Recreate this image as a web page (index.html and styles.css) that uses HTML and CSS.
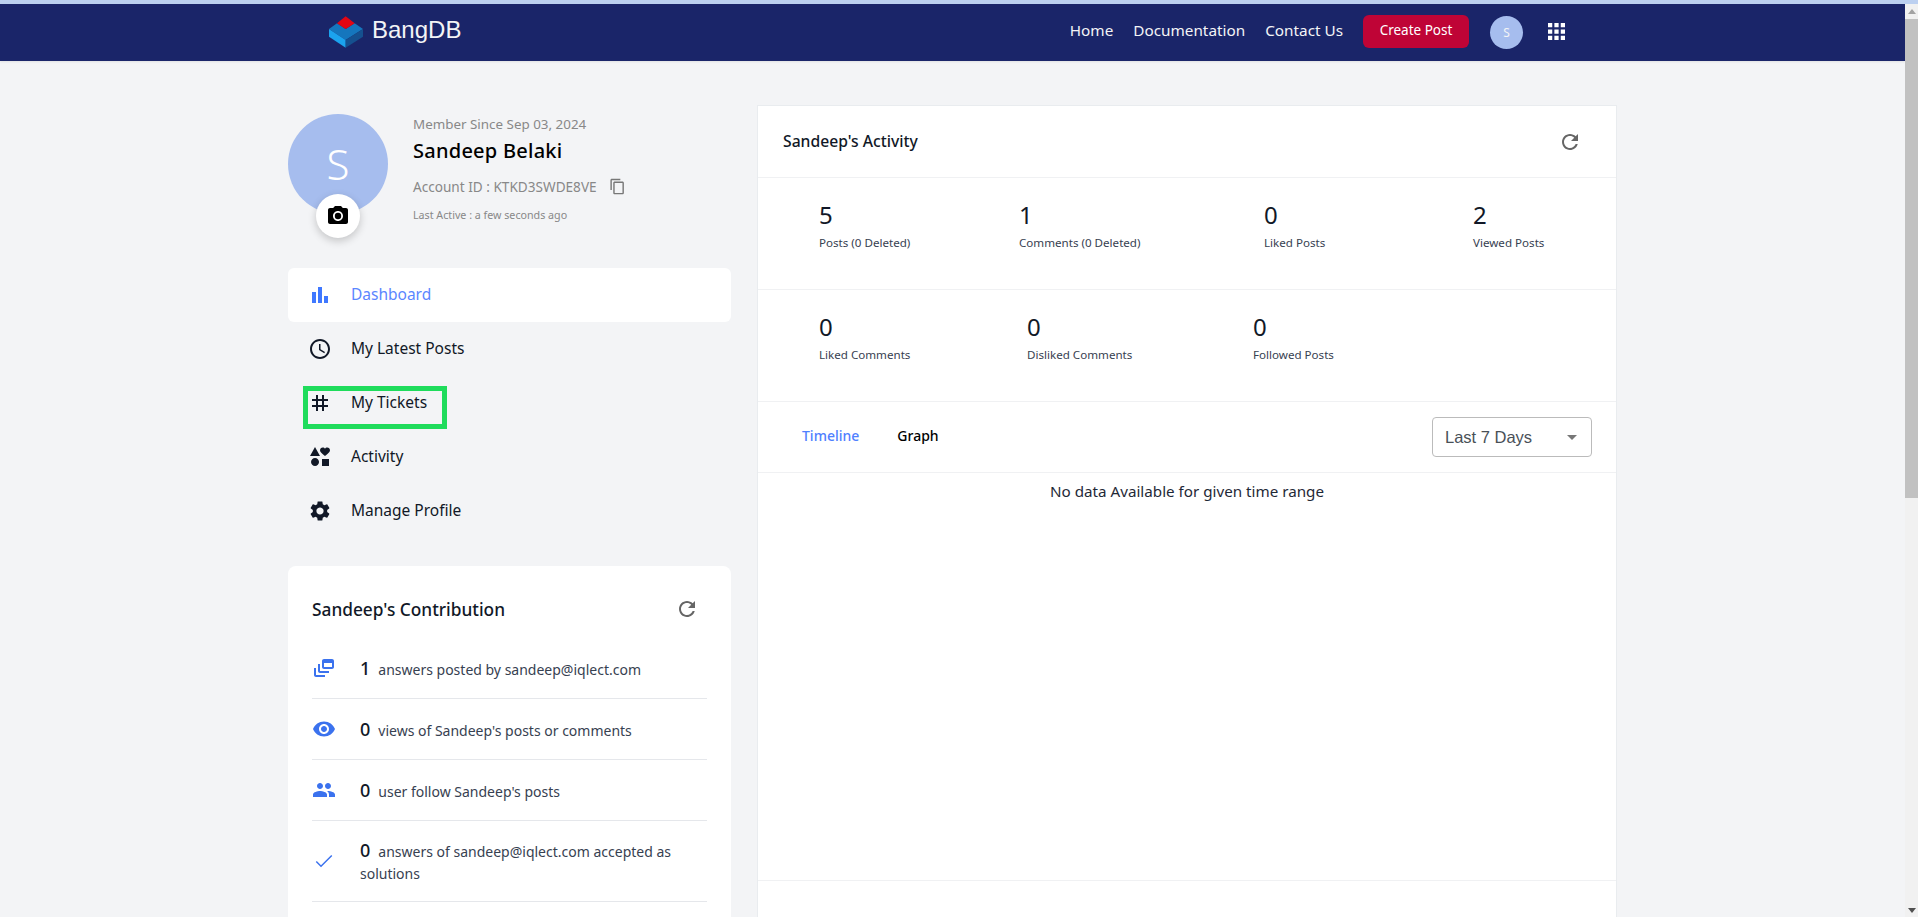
FILE: index.html
```html
<!DOCTYPE html>
<html lang="en">

<head>
    <meta charset="UTF-8">
    <meta name="viewport" content="width=device-width, initial-scale=1.0">
    <title>BangDB Profile</title>

    <link rel="stylesheet" href="styles.css">
</head>

<body>
    <div class="top-strip"></div>
    <div class="page">
        <div class="main">
            <header class="navbar">
                <a class="brand">
                    <svg class="brand-logo" viewBox="28 44 102 94">
                        <polygon fill="#1576bd" points="28,82 52,65 78,82 105,65 130,82 78,115"/>
                        <polygon fill="#1ba3ee" points="28,82 78,115 78,138 28,105"/>
                        <polygon fill="#15508f" points="78,115 130,82 130,105 78,138"/>
                        <polygon fill="#e30613" points="78,44 105,65 78,82 52,65"/>
                    </svg>
                    <span>BangDB</span>
                </a>
                <nav class="nav-links">
                    <a>Home</a>
                    <a>Documentation</a>
                    <a>Contact Us</a>
                </nav>
                <button class="create-btn" type="button">Create Post</button>
                <div class="nav-avatar">S</div>
                <svg class="apps-icon" viewBox="4 4 16 16"><path d="M4 8h4V4H4v4zm6 12h4v-4h-4v4zm-6 0h4v-4H4v4zm0-6h4v-4H4v4zm6 0h4v-4h-4v4zm6-10v4h4V4h-4zm-6 4h4V4h-4v4zm6 6h4v-4h-4v4zm0 6h4v-4h-4v4z"/></svg>
            </header>

            <div class="content">
                <aside class="sidebar">
                    <section class="profile">
                        <div class="avatar">
                            S
                            <div class="camera">
                                <svg class="icon" viewBox="0 0 24 24"><circle cx="12" cy="12" r="3.2"/><path d="M9 2L7.17 4H4c-1.1 0-2 .9-2 2v12c0 1.1.9 2 2 2h16c1.1 0 2-.9 2-2V6c0-1.1-.9-2-2-2h-3.17L15 2H9zm3 15c-2.76 0-5-2.24-5-5s2.24-5 5-5 5 2.24 5 5-2.24 5-5 5z"/></svg>
                            </div>
                        </div>
                        <div class="profile-info">
                            <div class="member">Member Since Sep 03, 2024</div>
                            <div class="name">Sandeep Belaki</div>
                            <div class="account">
                                Account ID : KTKD3SWDE8VE
                                <svg class="copy-icon" viewBox="0 0 24 24"><path d="M16 1H4c-1.1 0-2 .9-2 2v14h2V3h12V1zm3 4H8c-1.1 0-2 .9-2 2v14c0 1.1.9 2 2 2h11c1.1 0 2-.9 2-2V7c0-1.1-.9-2-2-2zm0 16H8V7h11v14z"/></svg>
                            </div>
                            <div class="last-active">Last Active : a few seconds ago</div>
                        </div>
                    </section>

                    <ul class="menu">
                        <li class="menu-item active">
                            <svg class="icon" viewBox="0 0 24 24"><path d="M4 9h4v11H4zm12 4h4v7h-4zm-6-9h4v16h-4z"/></svg>
                            Dashboard
                        </li>
                        <li class="menu-item">
                            <svg class="icon" viewBox="0 0 24 24"><path d="M11.99 2C6.47 2 2 6.48 2 12s4.47 10 9.99 10C17.52 22 22 17.52 22 12S17.52 2 11.99 2zM12 20c-4.42 0-8-3.58-8-8s3.58-8 8-8 8 3.58 8 8-3.58 8-8 8zm.5-13H11v6l5.25 3.15.75-1.23-4.5-2.67z"/></svg>
                            My Latest Posts
                        </li>
                        <li class="menu-item">
                            <svg class="icon" viewBox="0 0 24 24"><path d="M20 10V8h-4V4h-2v4h-4V4H8v4H4v2h4v4H4v2h4v4h2v-4h4v4h2v-4h4v-2h-4v-4h4zm-6 4h-4v-4h4v4z"/></svg>
                            My Tickets
                            <span class="highlight"></span>
                        </li>
                        <li class="menu-item">
                            <svg class="icon" viewBox="0 0 24 24"><path d="M7.02 13c-2.21 0-4 1.79-4 4s1.79 4 4 4 4-1.79 4-4-1.79-4-4-4zm6.98 1v7h7v-7zM7 2l-5 9h10zm12.25.5c-1.06 0-1.81.56-2.25 1.17-.44-.61-1.19-1.17-2.25-1.17C13.19 2.5 12 3.78 12 5.25c0 2 2.42 3.42 5 5.75 2.58-2.33 5-3.75 5-5.75 0-1.47-1.19-2.75-2.75-2.75z"/></svg>
                            Activity
                        </li>
                        <li class="menu-item">
                            <svg class="icon" viewBox="0 0 24 24"><path d="M19.14 12.94c.04-.3.06-.61.06-.94 0-.32-.02-.64-.07-.94l2.03-1.58c.18-.14.23-.41.12-.61l-1.92-3.32c-.12-.22-.37-.29-.59-.22l-2.39.96c-.5-.38-1.03-.7-1.62-.94l-.36-2.54c-.04-.24-.24-.41-.48-.41h-3.84c-.24 0-.43.17-.47.41l-.36 2.54c-.59.24-1.13.57-1.62.94l-2.39-.96c-.22-.08-.47 0-.59.22L2.74 8.87c-.12.21-.08.47.12.61l2.03 1.58c-.05.3-.09.63-.09.94s.02.64.07.94l-2.03 1.58c-.18.14-.23.41-.12.61l1.92 3.32c.12.22.37.29.59.22l2.39-.96c.5.38 1.03.7 1.62.94l.36 2.54c.05.24.24.41.48.41h3.84c.24 0 .44-.17.47-.41l.36-2.54c.59-.24 1.13-.56 1.62-.94l2.39.96c.22.08.47 0 .59-.22l1.92-3.32c.12-.22.07-.47-.12-.61l-2.01-1.58zM12 15.6c-1.98 0-3.6-1.62-3.6-3.6s1.62-3.6 3.6-3.6 3.6 1.62 3.6 3.6-1.62 3.6-3.6 3.6z"/></svg>
                            Manage Profile
                        </li>
                    </ul>

                    <section class="contribution">
                        <div class="contribution-head">
                            <h3>Sandeep's Contribution</h3>
                            <svg class="icon refresh" viewBox="0 0 24 24"><path d="M17.65 6.35C16.2 4.9 14.21 4 12 4c-4.42 0-7.99 3.58-7.99 8s3.57 8 7.99 8c3.73 0 6.84-2.55 7.73-6h-2.08c-.82 2.33-3.04 4-5.65 4-3.31 0-6-2.69-6-6s2.69-6 6-6c1.66 0 3.14.69 4.22 1.78L13 11h7V4l-2.35 2.35z"/></svg>
                        </div>
                        <div class="contribution-row">
                            <svg class="icon blue" viewBox="0 0 24 24"><path d="M8 8H6v7c0 1.1.9 2 2 2h9v-2H8V8z"/><path d="M20 3h-8c-1.1 0-2 .9-2 2v6c0 1.1.9 2 2 2h8c1.1 0 2-.9 2-2V5c0-1.1-.9-2-2-2zm0 8h-8V7h8v4z"/><path d="M4 12H2v7c0 1.1.9 2 2 2h9v-2H4v-7z"/></svg>
                            <p><b>1</b>answers posted by sandeep@iqlect.com</p>
                        </div>
                        <div class="contribution-row">
                            <svg class="icon blue" viewBox="0 0 24 24"><path d="M12 4.5C7 4.5 2.73 7.61 1 12c1.73 4.39 6 7.5 11 7.5s9.27-3.11 11-7.5c-1.73-4.39-6-7.5-11-7.5zM12 17c-2.76 0-5-2.24-5-5s2.24-5 5-5 5 2.24 5 5-2.24 5-5 5zm0-8c-1.66 0-3 1.34-3 3s1.34 3 3 3 3-1.34 3-3-1.34-3-3-3z"/></svg>
                            <p><b>0</b>views of Sandeep's posts or comments</p>
                        </div>
                        <div class="contribution-row">
                            <svg class="icon blue" viewBox="0 0 24 24"><path d="M16 11c1.66 0 2.99-1.34 2.99-3S17.66 5 16 5c-1.66 0-3 1.34-3 3s1.34 3 3 3zm-8 0c1.66 0 2.99-1.34 2.99-3S9.66 5 8 5C6.34 5 5 6.34 5 8s1.34 3 3 3zm0 2c-2.33 0-7 1.17-7 3.5V19h14v-2.5c0-2.33-4.67-3.5-7-3.5zm8 0c-.29 0-.62.02-.97.05 1.16.84 1.97 1.97 1.97 3.45V19h6v-2.5c0-2.33-4.67-3.5-7-3.5z"/></svg>
                            <p><b>0</b>user follow Sandeep's posts</p>
                        </div>
                        <div class="contribution-row">
                            <svg class="icon blue" viewBox="0 0 24 24"><path d="M9 16.17L4.83 12l-1.06 1.06L9 18.3 20.3 7l-1.06-1.06z"/></svg>
                            <p><b>0</b>answers of sandeep@iqlect.com accepted as <span>solutions</span></p>
                        </div>
                    </section>
                </aside>

                <section class="activity">
                    <div class="activity-head">
                        <h3>Sandeep's Activity</h3>
                        <svg class="icon refresh" viewBox="0 0 24 24"><path d="M17.65 6.35C16.2 4.9 14.21 4 12 4c-4.42 0-7.99 3.58-7.99 8s3.57 8 7.99 8c3.73 0 6.84-2.55 7.73-6h-2.08c-.82 2.33-3.04 4-5.65 4-3.31 0-6-2.69-6-6s2.69-6 6-6c1.66 0 3.14.69 4.22 1.78L13 11h7V4l-2.35 2.35z"/></svg>
                    </div>
                    <div class="stats stats-posts">
                        <div class="stat"><strong>5</strong><span>Posts (0 Deleted)</span></div>
                        <div class="stat"><strong>1</strong><span>Comments (0 Deleted)</span></div>
                        <div class="stat"><strong>0</strong><span>Liked Posts</span></div>
                        <div class="stat"><strong>2</strong><span>Viewed Posts</span></div>
                    </div>
                    <div class="stats stats-comments">
                        <div class="stat"><strong>0</strong><span>Liked Comments</span></div>
                        <div class="stat"><strong>0</strong><span>Disliked Comments</span></div>
                        <div class="stat"><strong>0</strong><span>Followed Posts</span></div>
                    </div>
                    <div class="tabs">
                        <a class="tab active">Timeline</a>
                        <a class="tab">Graph</a>
                        <div class="range-select">Last 7 Days<span class="caret"></span></div>
                    </div>
                    <div class="activity-body">No data Available for given time range</div>
                    <div class="activity-foot"></div>
                </section>
            </div>
        </div>

        <div class="scrollbar">
            <span class="arrow up"></span>
            <span class="thumb"></span>
            <span class="arrow down"></span>
        </div>
    </div>
</body>

</html>
```

FILE: styles.css
```css
* {
    box-sizing: border-box;
}

html,
body {
    height: 100%;
    overflow: hidden;
}

body {
    margin: 0;
    background: #f3f4f6;
    font-family: "Noto Sans", sans-serif;
    font-size: 16px;
    color: #111827;
}

h3,
p,
ul {
    margin: 0;
    padding: 0;
}

.top-strip {
    height: 4px;
    background: #bcd0f0;
}

.page {
    display: flex;
    height: 913px;
}

.main {
    flex: 1;
    min-width: 0;
    overflow: hidden;
}

/* navbar */
.navbar {
    display: flex;
    align-items: center;
    height: 57px;
    padding-left: 329px;
    background: #1a2569;
    color: #f3f4f6;
    box-shadow: 0 1px 2px rgba(0, 0, 0, 0.08);
}

.brand {
    display: flex;
    align-items: center;
    gap: 9px;
    margin-right: auto;
    font-family: "Liberation Sans", sans-serif;
    font-size: 24px;
}

.brand span {
    margin-top: -5px;
}

.brand-logo {
    width: 34px;
    height: 32px;
    margin-top: -2px;
}

.nav-links {
    display: flex;
    gap: 20px;
    margin-top: -6px;
    font-size: 15.3px;
}

.create-btn {
    width: 106px;
    height: 33px;
    margin: -2px 0 0 20px;
    padding: 0 0 3px;
    border: 0;
    border-radius: 6px;
    background: #bf0436;
    color: #fff;
    font-family: inherit;
    font-size: 13.5px;
}

.nav-avatar {
    display: flex;
    align-items: center;
    justify-content: center;
    width: 33px;
    height: 33px;
    margin-left: 21px;
    border-radius: 50%;
    background: #a6bdee;
    font-size: 12px;
}

.apps-icon {
    width: 17px;
    height: 17px;
    margin: -3px 340px 0 25px;
    fill: #fff;
}

/* page body */
.content {
    display: flex;
    gap: 26px;
    padding: 44px 0 0 288px;
}

.sidebar {
    flex: none;
    width: 443px;
}

.icon {
    flex: none;
    width: 24px;
    height: 24px;
    fill: currentColor;
}

.blue {
    color: #3b72ee;
}

.refresh {
    color: #666;
}

/* profile */
.profile {
    display: flex;
    gap: 25px;
    height: 163px;
    padding-top: 9px;
}

.avatar {
    position: relative;
    flex: none;
    width: 100px;
    height: 100px;
    border-radius: 50%;
    background: #a6bdee;
    color: #fff;
    font-size: 42px;
    font-weight: 300;
    line-height: 100px;
    text-align: center;
}

.camera {
    position: absolute;
    top: 80px;
    left: 28px;
    display: flex;
    align-items: center;
    justify-content: center;
    width: 44px;
    height: 44px;
    border-radius: 50%;
    background: #fff;
    color: #000;
    box-shadow: 0 3px 8px rgba(0, 0, 0, 0.2);
}

.member {
    font-size: 13.4px;
    line-height: 20px;
    color: #888;
}

.name {
    margin-top: 3px;
    font-size: 20px;
    font-weight: 500;
    letter-spacing: 0.25px;
    line-height: 28px;
    color: #000;
}

.account {
    display: flex;
    align-items: center;
    gap: 12px;
    height: 24px;
    margin-top: 9px;
    font-size: 13.6px;
    color: #888;
}

.copy-icon {
    width: 17px;
    height: 17px;
    fill: #777;
}

.last-active {
    margin-top: 9px;
    font-size: 10.7px;
    line-height: 16px;
    color: #888;
}

/* side menu */
.menu {
    list-style: none;
}

.menu-item {
    position: relative;
    display: flex;
    align-items: center;
    gap: 19px;
    height: 54px;
    padding: 0 0 2px 20px;
    border-radius: 6px;
    font-size: 15.5px;
    color: #111827;
}

.menu-item .icon {
    margin-top: 2px;
}

.menu-item.active {
    background: #fff;
    color: #5b86ff;
}

.menu-item.active .icon {
    color: #3f78ff;
}

.highlight {
    position: absolute;
    top: 10px;
    left: 15px;
    width: 144px;
    height: 43px;
    border: 5px solid #1fdc5c;
}

/* contribution card */
.contribution {
    height: 360px;
    margin-top: 28px;
    padding: 30px 24px 0;
    border-radius: 8px 8px 0 0;
    background: #fff;
}

.contribution-head {
    display: flex;
    align-items: center;
    justify-content: space-between;
    height: 26px;
    padding-right: 8px;
    margin-bottom: 16px;
}

.contribution-head h3 {
    font-size: 17.3px;
    font-weight: 500;
}

.contribution-row {
    display: flex;
    align-items: center;
    gap: 24px;
    box-sizing: content-box;
    min-height: 24px;
    padding: 18px 0;
    border-bottom: 1px solid #e5e7eb;
}

.contribution-row p {
    margin: 2px 0 -2px;
    font-size: 14px;
    line-height: 22px;
    color: #374151;
}

.contribution-row b {
    display: inline-block;
    margin-right: 8px;
    font-size: 18px;
    font-weight: 500;
    line-height: 18px;
    color: #111827;
}

/* activity card */
.activity {
    flex: none;
    width: 860px;
    height: 820px;
    background: #fff;
    border: 1px solid #e9ecef;
}

.activity-head {
    display: flex;
    align-items: center;
    justify-content: space-between;
    box-sizing: content-box;
    height: 71px;
    padding: 0 34px 0 25px;
    border-bottom: 1px solid #f0f1f3;
}

.activity-head h3 {
    margin-top: -1px;
    font-size: 15.7px;
    font-weight: 500;
}

.stats {
    display: grid;
    height: 112px;
    padding: 21px 0 0 61px;
    border-bottom: 1px solid #f0f1f3;
}

.stats-posts {
    grid-template-columns: 200px 245px 209px 1fr;
}

.stats-comments {
    grid-template-columns: 208px 226px 1fr;
}

.stat strong,
.stat span {
    display: block;
}

.stat strong {
    font-size: 24px;
    font-weight: 400;
    line-height: 32px;
    color: #111827;
}

.stat span {
    margin-top: 3px;
    font-size: 11.6px;
    line-height: 18px;
    color: #374151;
}

.tabs {
    display: flex;
    align-items: center;
    gap: 38px;
    height: 71px;
    padding: 0 24px 0 44px;
    border-bottom: 1px solid #f0f1f3;
}

.tab {
    margin-top: -4px;
    font-size: 14px;
    font-weight: 500;
    color: #000;
}

.tab.active {
    color: #4f80ff;
}

.range-select {
    position: relative;
    display: flex;
    align-items: center;
    width: 160px;
    height: 40px;
    margin-left: auto;
    padding-left: 12px;
    border: 1px solid #bbb;
    border-radius: 4px;
    font-family: "Liberation Sans", sans-serif;
    font-size: 16.5px;
    color: #495057;
}

.caret {
    position: absolute;
    top: 17px;
    right: 14px;
    border-top: 5px solid #777;
    border-left: 5px solid transparent;
    border-right: 5px solid transparent;
}

.activity-body {
    height: 408px;
    padding-top: 6px;
    border-bottom: 1px solid #f0f1f3;
    font-size: 15.2px;
    line-height: 24px;
    text-align: center;
    color: #1f2937;
}

/* window scrollbar */
.scrollbar {
    flex: none;
    display: flex;
    flex-direction: column;
    align-items: center;
    width: 13px;
    background: #f1f1f1;
}

.arrow {
    flex: none;
    width: 0;
    height: 0;
    border-left: 4px solid transparent;
    border-right: 4px solid transparent;
}

.arrow.up {
    margin: 5px 0 5px;
    border-bottom: 5px solid #a3a3a3;
}

.arrow.down {
    margin: auto 0 4px;
    border-top: 5px solid #505050;
}

.thumb {
    width: 13px;
    height: 479px;
    background: #c1c1c1;
}
```
